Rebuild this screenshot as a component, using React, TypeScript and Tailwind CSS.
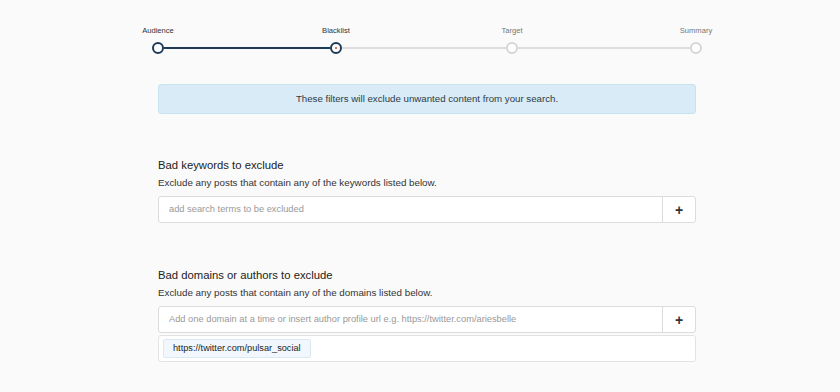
import React from "react";

type Step = { label: string; state: "done" | "current" | "todo" };

const steps: Step[] = [
    { label: "Audience", state: "done" },
    { label: "Blacklist", state: "current" },
    { label: "Target", state: "todo" },
    { label: "Summary", state: "todo" },
];

const lineWidths = ["w-[166px]", "w-[164px]", "w-[172px]"];

const StepDot: React.FC<{ step: Step }> = ({ step }) => (
    <div className="flex w-3 flex-col items-center">
        <span
            className={
                step.state === "todo"
                    ? "whitespace-nowrap text-[7.6px] leading-[10px] text-[#777]"
                    : "whitespace-nowrap text-[7.6px] leading-[10px] text-[#333]"
            }
        >
            {step.label}
        </span>
        <div
            className={
                step.state === "todo"
                    ? "mt-[6px] flex h-3 w-3 items-center justify-center rounded-full border-2 border-[#d6d6d6] bg-white"
                    : "mt-[6px] flex h-3 w-3 items-center justify-center rounded-full border-2 border-[#1d3b57] bg-white"
            }
        >
            {step.state === "current" && <div className="h-[2px] w-[2px] rounded-full bg-[#d9412b]" />}
        </div>
    </div>
);

const AddInput: React.FC<{ placeholder: string }> = ({ placeholder }) => (
    <div className="flex h-[27px] rounded-[3px] border border-[#dcdcdc] bg-white">
        <input
            className="flex-1 bg-transparent px-[10px] text-[9.3px] text-[#555] outline-none placeholder:text-[#999]"
            placeholder={placeholder}
        />
        <button className="flex w-[33px] items-center justify-center border-l border-[#dcdcdc] text-[14px] font-bold leading-none text-[#333]">
            +
        </button>
    </div>
);

export default function App() {
    return (
        <div className="min-h-[392px] w-full bg-[#fafafa] font-['Liberation_Sans',Arial,sans-serif] text-[#333]">
            <div className="ml-[152px] flex w-[550px] items-end pt-[26px]">
                {steps.map((s, i) => (
                    <React.Fragment key={s.label}>
                        <StepDot step={s} />
                        {i < lineWidths.length && (
                            <div
                                className={
                                    i === 0
                                        ? `mb-[5px] h-[2px] ${lineWidths[i]} bg-[#1d3b57]`
                                        : `mb-[5px] h-[2px] ${lineWidths[i]} bg-[#dedede]`
                                }
                            />
                        )}
                    </React.Fragment>
                ))}
            </div>

            <div className="ml-[158px] w-[538px] pt-[30px]">
                <div className="flex h-[30px] items-center justify-center rounded-[3px] border border-[#c7e3ef] bg-[#d8ebf6] text-[9.7px] text-[#2f3b45]">
                    These filters will exclude unwanted content from your search.
                </div>

                <div className="pt-[44px]">
                    <h3 className="text-[11.3px] leading-[15px] text-[#222]">Bad keywords to exclude</h3>
                    <p className="mt-[3px] text-[9.8px] leading-[13px] text-[#333]">
                        Exclude any posts that contain any of the keywords listed below.
                    </p>
                    <div className="mt-[7px]">
                        <AddInput placeholder="add search terms to be excluded" />
                    </div>
                </div>

                <div className="pt-[45px]">
                    <h3 className="text-[11.3px] leading-[15px] text-[#222]">Bad domains or authors to exclude</h3>
                    <p className="mt-[3px] text-[9.8px] leading-[13px] text-[#333]">
                        Exclude any posts that contain any of the domains listed below.
                    </p>
                    <div className="mt-[7px]">
                        <AddInput placeholder="Add one domain at a time or insert author profile url e.g. https://twitter.com/ariesbelle" />
                    </div>
                    <div className="mt-[2px] flex h-[27px] items-center rounded-[3px] border border-[#e3e3e3] bg-white px-[4px]">
                        <span className="flex h-[19px] items-center rounded-[2px] border border-[#dbe9f3] bg-[#f1f7fc] px-[9px] text-[9.2px] text-[#222]">
                            https://twitter.com/pulsar_social
                        </span>
                    </div>
                </div>
            </div>
        </div>
    );
}
